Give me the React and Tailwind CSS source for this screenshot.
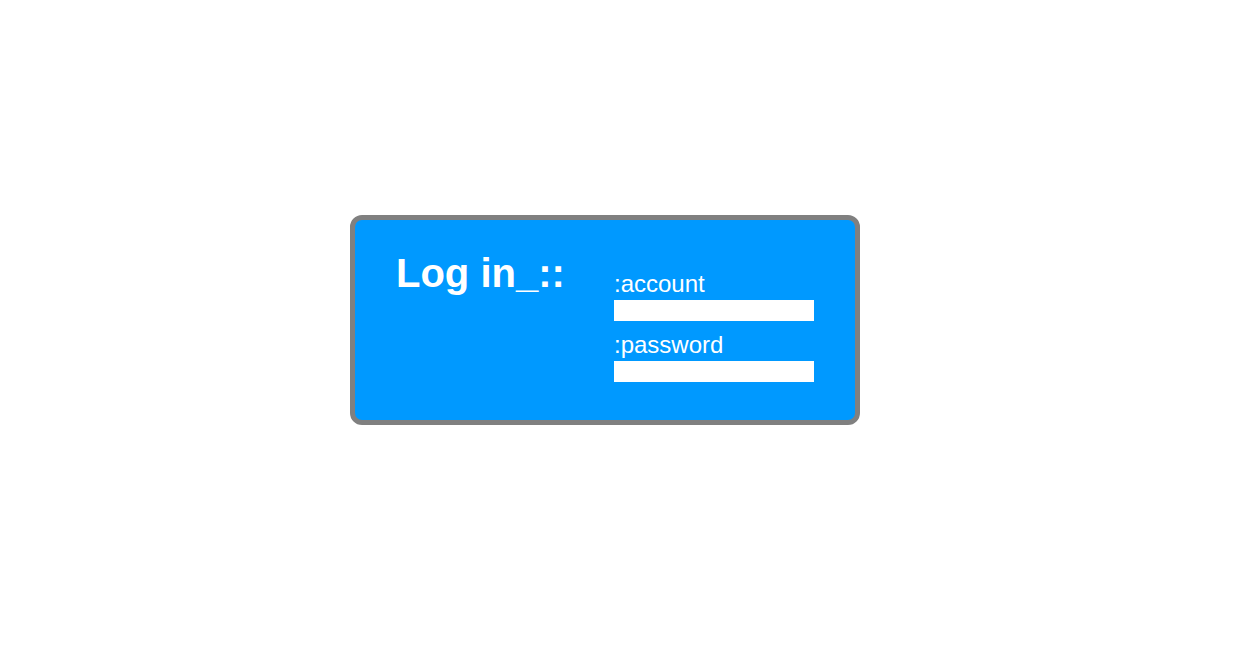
export default function App() {
  return (
    <div className="min-h-screen bg-white font-['Liberation_Sans',Arial,sans-serif]">
      <div className="pt-[215px] pl-[350px]">
        <div className="flex w-[510px] h-[210px] rounded-[12px] border-[5px] border-[#808080] bg-[#0099ff] text-white">
          <div className="pl-[41px] pt-[30px] w-[259px]">
            <h1 className="text-[40px] leading-[46px] font-bold">Log in_::</h1>
          </div>
          <div className="pt-[50px] flex flex-col">
            <label className="text-[24px] leading-[28px]">:account</label>
            <input
              type="text"
              className="mt-[2px] w-[200px] h-[21px] bg-white border-0 outline-none"
            />
            <label className="mt-[10px] text-[24px] leading-[28px]">:password</label>
            <input
              type="password"
              className="mt-[2px] w-[200px] h-[21px] bg-white border-0 outline-none"
            />
          </div>
        </div>
      </div>
    </div>
  );
}
